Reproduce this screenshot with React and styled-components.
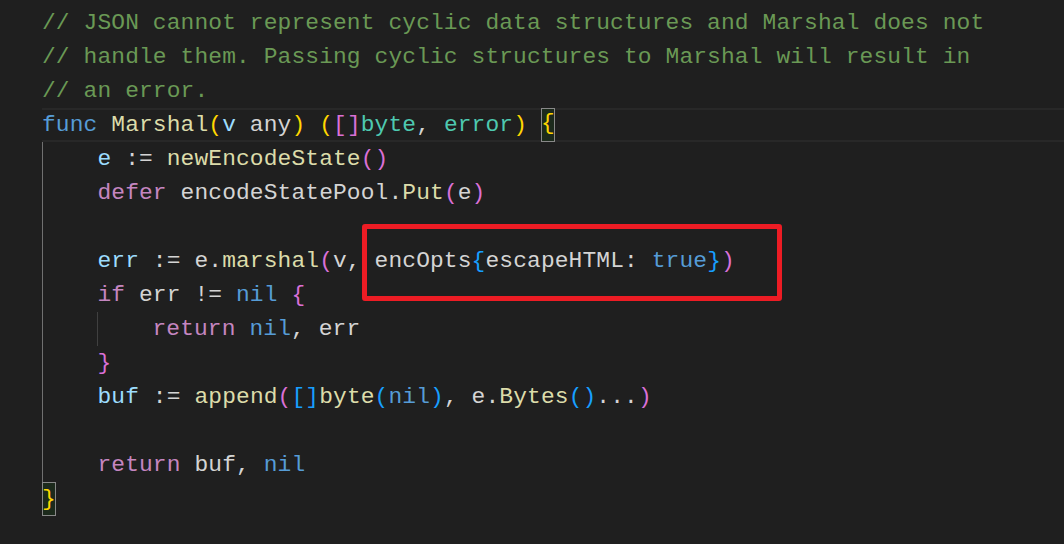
import styled, { createGlobalStyle } from "styled-components";

const GlobalStyle = createGlobalStyle`
  html, body {
    margin: 0;
    padding: 0;
    background: #1f1f1f;
  }
`;

const C = {
  text: "#d4d4d4",
  comment: "#6a9955",
  keyword: "#569cd6",
  control: "#c586c0",
  func: "#dcdcaa",
  variable: "#9cdcfe",
  type: "#4ec9b0",
  gold: "#ffd700",
  orchid: "#da70d6",
  blue: "#179fff",
};

const Page = styled.div`
  position: relative;
  width: 1064px;
  height: 544px;
  overflow: hidden;
  background: #1f1f1f;
`;

const Editor = styled.div`
  display: flex;
  flex-direction: column;
  padding: 6px 0 0 42px;
  font-family: "Liberation Mono", "DejaVu Sans Mono", monospace;
  font-size: 22.9px;
  letter-spacing: 0.12px;
  color: ${C.text};
`;

const Line = styled.div`
  height: 34px;
  line-height: 34px;
  white-space: pre;
  box-sizing: border-box;
  ${p => p.$current && `
    border-top: 2px solid #282828;
    border-bottom: 2px solid #282828;
    line-height: 30px;
  `}
`;

const Block = styled.div`
  display: flex;
  flex-direction: column;
  box-shadow: inset 1px 0 0 ${p => p.$guide};
  margin-left: ${p => p.$shift || 0}px;
`;

const Tok = styled.span`
  color: ${p => p.$c || C.text};
`;

const Match = styled.span`
  display: inline-block;
  height: 34px;
  vertical-align: top;
  box-sizing: border-box;
  margin-top: ${p => p.$offset || 0}px;
  background: #1c2a1c;
  box-shadow: inset 0 0 0 1px #888888;
  color: ${C.gold};
`;

const Highlight = styled.div`
  position: absolute;
  left: 362px;
  top: 224px;
  width: 420px;
  height: 77px;
  box-sizing: border-box;
  border: 5px solid #ed1c24;
  border-radius: 3px;
`;

export default function App() {
  return (
    <Page>
      <GlobalStyle />
      <Editor>
        <Line><Tok $c={C.comment}>// JSON cannot represent cyclic data structures and Marshal does not</Tok></Line>
        <Line><Tok $c={C.comment}>// handle them. Passing cyclic structures to Marshal will result in</Tok></Line>
        <Line><Tok $c={C.comment}>// an error.</Tok></Line>
        <Line $current>
          <Tok $c={C.keyword}>func</Tok> <Tok $c={C.func}>Marshal</Tok>
          <Tok $c={C.gold}>(</Tok><Tok $c={C.variable}>v</Tok> any<Tok $c={C.gold}>)</Tok> <Tok $c={C.gold}>(</Tok>
          <Tok $c={C.orchid}>[]</Tok><Tok $c={C.type}>byte</Tok>, <Tok $c={C.type}>error</Tok>
          <Tok $c={C.gold}>)</Tok> <Match $offset={-2}>{"{"}</Match>
        </Line>
        <Block $guide="#707070">
          <Line>    <Tok $c={C.variable}>e</Tok> := <Tok $c={C.func}>newEncodeState</Tok><Tok $c={C.orchid}>()</Tok></Line>
          <Line>    <Tok $c={C.control}>defer</Tok> encodeStatePool.<Tok $c={C.func}>Put</Tok><Tok $c={C.orchid}>(</Tok>e<Tok $c={C.orchid}>)</Tok></Line>
          <Line> </Line>
          <Line>
            {"    "}<Tok $c={C.variable}>err</Tok> := e.<Tok $c={C.func}>marshal</Tok><Tok $c={C.orchid}>(</Tok>v, encOpts
            <Tok $c={C.blue}>{"{"}</Tok>escapeHTML: <Tok $c={C.keyword}>true</Tok><Tok $c={C.blue}>{"}"}</Tok>
            <Tok $c={C.orchid}>)</Tok>
          </Line>
          <Line>    <Tok $c={C.control}>if</Tok> err != <Tok $c={C.keyword}>nil</Tok> <Tok $c={C.orchid}>{"{"}</Tok></Line>
          <Block $guide="#404040" $shift={55}>
            <Line>    <Tok $c={C.control}>return</Tok> <Tok $c={C.keyword}>nil</Tok>, err</Line>
          </Block>
          <Line>    <Tok $c={C.orchid}>{"}"}</Tok></Line>
          <Line>
            {"    "}<Tok $c={C.variable}>buf</Tok> := <Tok $c={C.func}>append</Tok><Tok $c={C.orchid}>(</Tok>
            <Tok $c={C.blue}>[]</Tok><Tok $c={C.func}>byte</Tok><Tok $c={C.blue}>(</Tok><Tok $c={C.keyword}>nil</Tok>
            <Tok $c={C.blue}>)</Tok>, e.<Tok $c={C.func}>Bytes</Tok><Tok $c={C.blue}>()</Tok>...<Tok $c={C.orchid}>)</Tok>
          </Line>
          <Line> </Line>
          <Line>    <Tok $c={C.control}>return</Tok> buf, <Tok $c={C.keyword}>nil</Tok></Line>
        </Block>
        <Line><Match>{"}"}</Match></Line>
      </Editor>
      <Highlight />
    </Page>
  );
}
